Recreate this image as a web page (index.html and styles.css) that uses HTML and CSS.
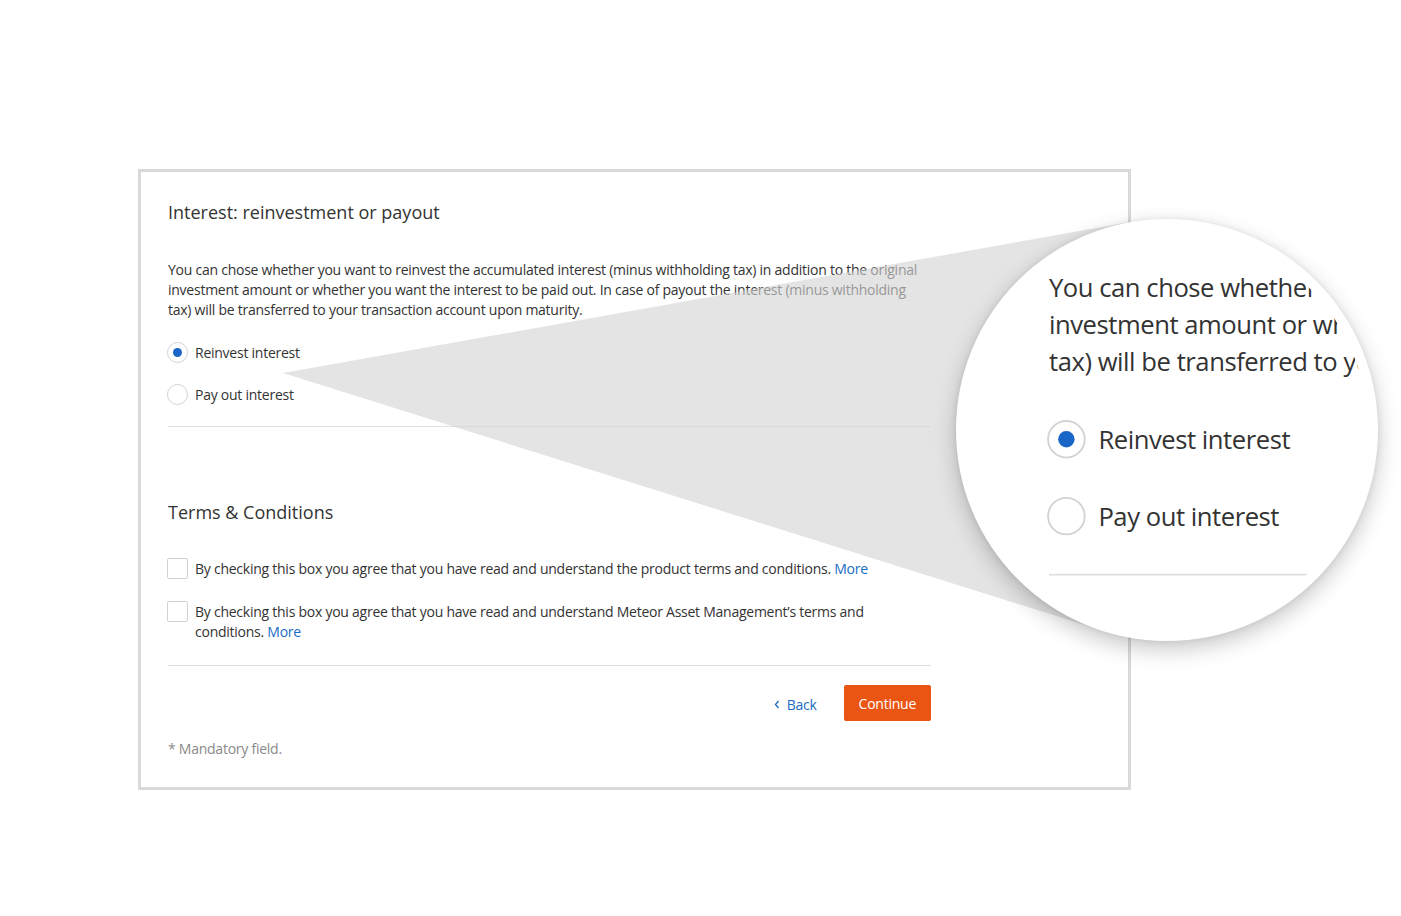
FILE: index.html
```html
<!DOCTYPE html>
<html lang="en">
<head>
    <meta charset="UTF-8">
    <meta name="viewport" content="width=device-width, initial-scale=1.0">
    <title>Interest: reinvestment or payout</title>
    <link rel="stylesheet" href="styles.css">
</head>
<body>
    <div class="page">
        <div class="card">
            <div class="form">
                <h2 class="title">Interest: reinvestment or payout</h2>
                <p class="text">You can chose whether you want to reinvest the accumulated interest (minus withholding tax) in addition to the original investment amount or whether you want the interest to be paid out. In case of payout the interest (minus withholding tax) will be transferred to your transaction account upon maturity.</p>
                <div class="options">
                    <label class="option"><span class="radio checked"></span>Reinvest interest</label>
                    <label class="option"><span class="radio"></span>Pay out interest</label>
                </div>
                <div class="divider"></div>

                <h2 class="title terms-title">Terms &amp; Conditions</h2>
                <div class="checks">
                    <label class="check"><span class="box"></span><span>By checking this box you agree that you have read and understand the product terms and conditions. <a href="#">More</a></span></label>
                    <label class="check"><span class="box"></span><span>By checking this box you agree that you have read and understand Meteor Asset Management’s terms and conditions. <a href="#">More</a></span></label>
                </div>
                <div class="divider bottom"></div>

                <div class="actions">
                    <a class="back" href="#">
                        <svg width="6" height="9" viewBox="0 0 6 9"><path d="M4.5 1 L1.5 4.5 L4.5 8" fill="none" stroke="#1a6dc4" stroke-width="1.3"/></svg>
                        Back
                    </a>
                    <button class="continue">Continue</button>
                </div>
                <p class="note">* Mandatory field.</p>
            </div>
        </div>
    </div>

    <!-- magnifier overlay -->
    <svg class="cone" width="1401" height="916" viewBox="0 0 1401 916">
        <polygon points="283,373 1130,222 1167,430 1104,631" />
    </svg>
    <div class="lens">
        <div class="lens-view">
            <div class="lens-content">
                <p class="text">You can chose whether you want to reinvest the accumulated interest (minus withholding tax) in addition to the original investment amount or whether you want the interest to be paid out. In case of payout the interest (minus withholding tax) will be transferred to your transaction account upon maturity.</p>
                <div class="options">
                    <label class="option"><span class="radio checked"></span>Reinvest interest</label>
                    <label class="option"><span class="radio"></span>Pay out interest</label>
                </div>
                <div class="divider"></div>
            </div>
        </div>
    </div>
</body>
</html>
```

FILE: styles.css
```css
body {
    margin: 0;
    background: #fff;
    font-family: "Open Sans", Arial, sans-serif;
    color: #333;
}
.page {
    padding: 169px 0 0 138px;
}
.card {
    width: 993px;
    height: 621px;
    box-sizing: border-box;
    border: 3px solid #d9d9d9;
    padding: 28px 27px;
}
.form {
    width: 763px;
}
.title {
    margin: 0;
    font-size: 18px;
    line-height: 24px;
    font-weight: 400;
    color: #333;
}
.text {
    margin: 36px 0 0;
    font-size: 14px;
    line-height: 20px;
    letter-spacing: -0.25px;
}
.options {
    display: flex;
    flex-direction: column;
    gap: 21px;
    margin-top: 22px;
}
.option {
    display: flex;
    align-items: center;
    gap: 7px;
    height: 21px;
    font-size: 14px;
    letter-spacing: -0.25px;
    margin-left: -1px;
}
.radio {
    width: 19px;
    height: 19px;
    border: 1px solid #d2d2d2;
    border-radius: 50%;
    display: flex;
    align-items: center;
    justify-content: center;
    background: #fff;
}
.radio.checked::after {
    content: "";
    width: 9px;
    height: 9px;
    border-radius: 50%;
    background: #1a66c6;
}
.divider {
    height: 1px;
    background: #e0e0e0;
    margin-top: 21px;
}
.terms-title {
    margin-top: 73px;
}
.checks {
    display: flex;
    flex-direction: column;
    gap: 23px;
    margin-top: 35px;
}
.check {
    display: flex;
    align-items: flex-start;
    gap: 7px;
    font-size: 14px;
    line-height: 20px;
    letter-spacing: -0.25px;
    margin-left: -1px;
}
.box {
    flex: none;
    width: 19px;
    height: 19px;
    border: 1px solid #d2d2d2;
    border-radius: 2px;
    margin-top: -1px;
}
.check a {
    color: #1a6dc4;
    text-decoration: none;
}
.divider.bottom {
    margin-top: 23px;
}
.actions {
    display: flex;
    justify-content: flex-end;
    align-items: center;
    gap: 27px;
    margin-top: 19px;
}
.back {
    display: flex;
    align-items: center;
    gap: 7px;
    color: #1a6dc4;
    text-decoration: none;
    font-size: 14px;
    letter-spacing: -0.25px;
    padding-top: 2px;
}
.continue {
    height: 36px;
    padding: 0 15px;
    border: none;
    border-radius: 2px;
    background: #ea5514;
    color: #fff;
    font-family: inherit;
    font-size: 14px;
    letter-spacing: -0.25px;
}
.note {
    margin: 18px 0 0;
    font-size: 14px;
    line-height: 20px;
    letter-spacing: -0.25px;
    color: #8a8a8a;
}

.cone {
    position: absolute;
    left: 0;
    top: 0;
    pointer-events: none;
}
.cone polygon {
    fill: #d3d3d3;
    opacity: 0.62;
}
.lens {
    position: absolute;
    left: 956px;
    top: 219px;
    width: 422px;
    height: 422px;
    border-radius: 50%;
    background: #fff;
    box-shadow: 0 8px 22px rgba(0, 0, 0, 0.22), 0 0 6px rgba(0, 0, 0, 0.08);
}
.lens-view {
    position: absolute;
    inset: 10px;
    border-radius: 50%;
    overflow: hidden;
}
.lens-content {
    position: absolute;
    left: 83px;
    top: 41px;
    width: 763px;
    transform: scale(1.83);
    transform-origin: 0 0;
}
.lens-content .text {
    margin: 0;
}
```
